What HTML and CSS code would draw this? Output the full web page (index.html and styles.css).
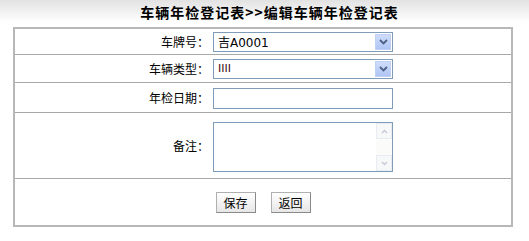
FILE: index.html
```html
<!DOCTYPE html>
<html lang="zh-CN">
<head>
  <meta charset="UTF-8" />
  <title>编辑车辆年检登记表</title>
  <link rel="stylesheet" href="styles.css">
</head>
<body>
  <div class="title-bar">车辆年检登记表&gt;&gt;编辑车辆年检登记表</div>

  <div class="edit-form">
    <div class="row row-plate">
      <div class="label">车牌号：</div>
      <div class="field">
        <div class="select-box">
          <span class="select-text">吉A0001</span>
          <span class="select-arrow">
            <svg width="9" height="6" viewBox="0 0 9 6"><path d="M1 1 L4.5 4.5 L8 1" fill="none" stroke="#4d6185" stroke-width="1.8"/></svg>
          </span>
        </div>
      </div>
    </div>

    <div class="row row-type">
      <div class="label">车辆类型：</div>
      <div class="field">
        <div class="select-box">
          <span class="select-text type-text">IIII</span>
          <span class="select-arrow">
            <svg width="9" height="6" viewBox="0 0 9 6"><path d="M1 1 L4.5 4.5 L8 1" fill="none" stroke="#4d6185" stroke-width="1.8"/></svg>
          </span>
        </div>
      </div>
    </div>

    <div class="row row-date">
      <div class="label">年检日期：</div>
      <div class="field">
        <input type="text" class="text-input">
      </div>
    </div>

    <div class="row row-note">
      <div class="label">备注：</div>
      <div class="field">
        <div class="note-box">
          <textarea class="note-input"></textarea>
          <div class="fake-scroll">
            <span class="scroll-btn">
              <svg width="7" height="5" viewBox="0 0 7 5"><path d="M1 4 L3.5 1.5 L6 4" fill="none" stroke="#c4cbd6" stroke-width="1.4"/></svg>
            </span>
            <span class="scroll-btn">
              <svg width="7" height="5" viewBox="0 0 7 5"><path d="M1 1 L3.5 3.5 L6 1" fill="none" stroke="#c4cbd6" stroke-width="1.4"/></svg>
            </span>
          </div>
        </div>
      </div>
    </div>

    <div class="row row-actions">
      <button class="btn">保存</button>
      <button class="btn">返回</button>
    </div>
  </div>
</body>
</html>
```

FILE: styles.css
```css
body {
  margin: 0;
  background: #fff;
  font-family: "Noto Sans CJK SC", "DejaVu Sans", sans-serif;
  font-size: 12px;
  color: #000;
}

.title-bar {
  height: 22px;
  line-height: 24px;
  padding-left: 10px;
  text-align: center;
  font-size: 14px;
  font-weight: bold;
  letter-spacing: 1px;
  background: linear-gradient(#e2e2e2, #ffffff);
}

.edit-form {
  width: 500px;
  margin: 5px 0 0 13px;
  border: 2px solid #b8b8b8;
  box-sizing: border-box;
}

.row {
  display: flex;
  align-items: center;
  border-top: 1px solid #a8a8a8;
}

.row:first-child {
  border-top: none;
}

.row-plate { height: 25px; }
.row-type { height: 27px; }
.row-date { height: 29px; }
.row-note { height: 65px; }
.row-actions {
  height: 46px;
  justify-content: center;
  gap: 15px;
}

.label {
  width: 198px;
  padding-right: 4px;
  box-sizing: border-box;
  text-align: right;
}

.field {
  flex: 1;
}

.select-box {
  width: 180px;
  height: 20px;
  border: 1px solid #7f9db9;
  box-sizing: border-box;
  display: flex;
  align-items: center;
  justify-content: space-between;
  padding: 0 1px 0 4px;
  background: #fff;
}

.select-text {
  font-family: "DejaVu Sans", "Noto Sans CJK SC", sans-serif;
  font-size: 12px;
}

.type-text {
  color: #3a0a14;
  font-size: 11px;
}

.select-arrow {
  width: 16px;
  height: 16px;
  display: flex;
  align-items: center;
  justify-content: center;
  background: linear-gradient(#cfdcfb, #afc5f5);
  border: 1px solid #c0d0f2;
  box-sizing: border-box;
}

.text-input {
  width: 180px;
  height: 21px;
  border: 1px solid #7f9db9;
  box-sizing: border-box;
  margin: 0;
  padding: 0 3px;
  margin-top: 1px;
}

.note-box {
  position: relative;
  width: 180px;
  height: 50px;
  margin-top: 3px;
}

.note-input {
  width: 100%;
  height: 100%;
  border: 1px solid #7f9db9;
  box-sizing: border-box;
  margin: 0;
  resize: none;
  display: block;
}

.fake-scroll {
  position: absolute;
  top: 1px;
  right: 1px;
  bottom: 1px;
  width: 16px;
  background: #fbfbf9;
  display: flex;
  flex-direction: column;
  justify-content: space-between;
}

.scroll-btn {
  height: 16px;
  display: flex;
  align-items: center;
  justify-content: center;
  border: 1px solid #e8ebf0;
  box-sizing: border-box;
  background: #f7f8fa;
}

.btn {
  width: 40px;
  height: 21px;
  margin: 0;
  padding: 0;
  font-family: "Noto Sans CJK SC", sans-serif;
  font-size: 12px;
  border: 1px solid #8a8a8a;
  border-top-color: #b0b0b0;
  border-left-color: #b0b0b0;
  background: linear-gradient(#ffffff, #e6e6e6);
  color: #000;
}
```
